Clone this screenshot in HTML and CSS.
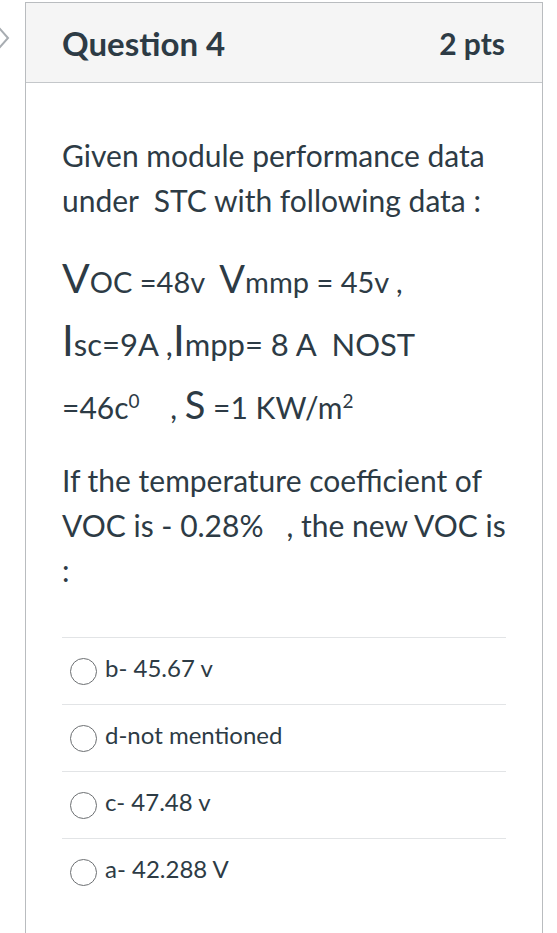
FILE: index.html
```html
<!DOCTYPE html>
<html>
<head>
<meta charset="utf-8">
<link rel="stylesheet" href="styles.css">
</head>
<body>
<div class="page">
  <div class="nav">
    <svg class="chev" width="12" height="24" viewBox="0 0 12 24"><polyline points="-1,2 8,12 -1,22" fill="none" stroke="#a8adb2" stroke-width="2"/></svg>
  </div>
  <div class="card">
    <div class="card-header">
      <h2 class="title">Question 4</h2>
      <div class="pts">2 pts</div>
    </div>
    <div class="content">
      <p class="para p1">Given module performance data under&nbsp; STC with following data :</p>
      <div class="formula">
        <div class="fline f1"><span class="big">V</span>OC =48v&nbsp; <span class="mid">V</span>mmp = 45v ,</div>
        <div class="fline f2"><span class="big">I</span>sc=9A ,<span class="big">I</span>mpp= 8 A&nbsp; NOST</div>
        <div class="fline f3">=46c<sup class="sup">0</sup>&nbsp;&nbsp;&nbsp; , <span class="mid">S</span> =1 KW/m<sup class="sup2">2</sup></div>
      </div>
      <p class="para p2">If the temperature coefficient of VOC is - 0.28%&nbsp;&nbsp; , the new VOC is :</p>
      <div class="answers">
        <label class="answer"><span class="radio"></span><span class="atext">b- 45.67 v</span></label>
        <label class="answer"><span class="radio"></span><span class="atext">d-not mentioned</span></label>
        <label class="answer"><span class="radio"></span><span class="atext">c- 47.48 v</span></label>
        <label class="answer"><span class="radio"></span><span class="atext">a- 42.288 V</span></label>
      </div>
    </div>
  </div>
</div>
</body>
</html>
```

FILE: styles.css
```css
html, body {
  margin: 0;
  padding: 0;
  background: #ffffff;
}
body {
  font-family: Lato, "Open Sans", sans-serif;
  color: #2d3b45;
}
.page {
  display: flex;
  padding-top: 2px;
  height: 931px;
  overflow: hidden;
}
.nav {
  width: 25px;
  flex: none;
}
.chev {
  display: block;
  margin-top: 24px;
}
.card {
  width: 516px;
  border: 1px solid #b9bcbf;
  border-bottom: none;
  flex: none;
}
.card-header {
  height: 79px;
  background: #f5f5f5;
  border-bottom: 1px solid #c4c7ca;
  display: flex;
  align-items: center;
  justify-content: space-between;
  padding: 0 37px 0 36px;
}
.title {
  margin: 0;
  font-size: 33px;
  font-weight: 700;
  color: #2d3b45;
}
.pts {
  font-size: 30px;
  font-weight: 700;
  color: #2d3b45;
}
.content {
  padding: 0 36px;
}
.para {
  margin: 0;
  font-size: 30px;
  line-height: 45px;
}
.p1 {
  margin-top: 50px;
}
.formula {
  margin-top: 27px;
  font-size: 30px;
}
.fline {
  height: 63px;
  line-height: 63px;
  white-space: nowrap;
}
.f1 {
  font-size: 29px;
}
.f2 {
  font-size: 31px;
}
.f3 {
  font-size: 30px;
}
.big {
  font-size: 42px;
  line-height: 1;
}
.f1 .big {
  font-size: 41px;
}
.mid {
  font-size: 38px;
  line-height: 1;
}
.sup {
  font-size: 19px;
  line-height: 1;
  vertical-align: 11px;
}
.sup2 {
  font-size: 19px;
  line-height: 1;
  vertical-align: 11px;
}
.p2 {
  margin-top: 19px;
}
.answers {
  margin-top: 44px;
}
.answer {
  display: flex;
  align-items: center;
  height: 66px;
  border-top: 1px solid #e2e4e6;
  padding-left: 8px;
  gap: 8px;
}
.radio {
  width: 25px;
  height: 25px;
  border: 1.5px solid #6c6f72;
  border-radius: 50%;
  flex: none;
}
.atext {
  font-size: 24px;
  margin-bottom: 8px;
}
```
